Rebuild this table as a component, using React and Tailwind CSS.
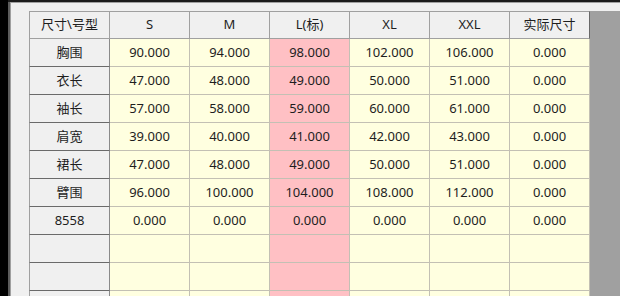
import React from "react";

const cols = ["S", "M", "L(标)", "XL", "XXL", "实际尺寸"];
const rows = [
  ["胸围", "90.000", "94.000", "98.000", "102.000", "106.000", "0.000"],
  ["衣长", "47.000", "48.000", "49.000", "50.000", "51.000", "0.000"],
  ["袖长", "57.000", "58.000", "59.000", "60.000", "61.000", "0.000"],
  ["肩宽", "39.000", "40.000", "41.000", "42.000", "43.000", "0.000"],
  ["裙长", "47.000", "48.000", "49.000", "50.000", "51.000", "0.000"],
  ["臂围", "96.000", "100.000", "104.000", "108.000", "112.000", "0.000"],
  ["8558", "0.000", "0.000", "0.000", "0.000", "0.000", "0.000"],
  ["", "", "", "", "", "", ""],
  ["", "", "", "", "", "", ""],
  ["", "", "", "", "", "", ""],
];

const font = { fontFamily: '"Noto Sans", "Noto Sans CJK SC", sans-serif' };

export default function App() {
  return (
    <div className="w-[620px] h-[296px] overflow-hidden flex bg-black text-[13px] text-[#1e1e1e]" style={font}>
      <div className="w-[8px] shrink-0 bg-black" />
      <div className="flex-1 flex flex-col">
        <div className="h-[2px] bg-[#1c1c1c] shrink-0" />
        <div className="flex-1 flex">
          <div className="w-[2px] bg-[#5c5c5c] shrink-0" />
          <div className="w-[1px] bg-[#a0a0a0] shrink-0" />
          <div className="flex-1 bg-[#f0f0f0] border-t border-[#a0a0a0] pl-[18px] pt-[8px] flex flex-col">
            <div className="flex-1 bg-[#a0a0a0] flex flex-col">
              <div className="flex h-[28px] shrink-0">
                <div className="w-[81px] shrink-0 border-l border-t border-r border-b border-[#a0a0a0] bg-[#f0f0f0] flex items-center justify-center">
                  尺寸\号型
                </div>
                {cols.map((c, i) => (
                  <div
                    key={c}
                    className={`w-[80px] shrink-0 border-t border-r border-b bg-[#f0f0f0] flex items-center justify-center ${
                      i === cols.length - 1 ? "border-t-[#a0a0a0] border-b-[#a0a0a0] border-r-[#696969]" : "border-[#a0a0a0]"
                    }`}
                  >
                    {c}
                  </div>
                ))}
              </div>
              {rows.map((r, ri) => (
                <div key={ri} className="flex h-[28px] shrink-0">
                  <div className="w-[81px] shrink-0 border-l border-l-[#a0a0a0] border-r border-r-[#8a8a8a] border-b border-b-[#6a6a6a] bg-[#f0f0f0] flex items-center justify-center">
                    {r[0]}
                  </div>
                  {r.slice(1).map((v, ci) => (
                    <div
                      key={ci}
                      className={`w-[80px] shrink-0 border-r border-b border-[#c3c0b4] flex items-center justify-center ${
                        ci === 2 ? "bg-[#ffc0c4]" : "bg-[#ffffe0]"
                      }`}
                    >
                      {v}
                    </div>
                  ))}
                </div>
              ))}
            </div>
          </div>
        </div>
      </div>
    </div>
  );
}
